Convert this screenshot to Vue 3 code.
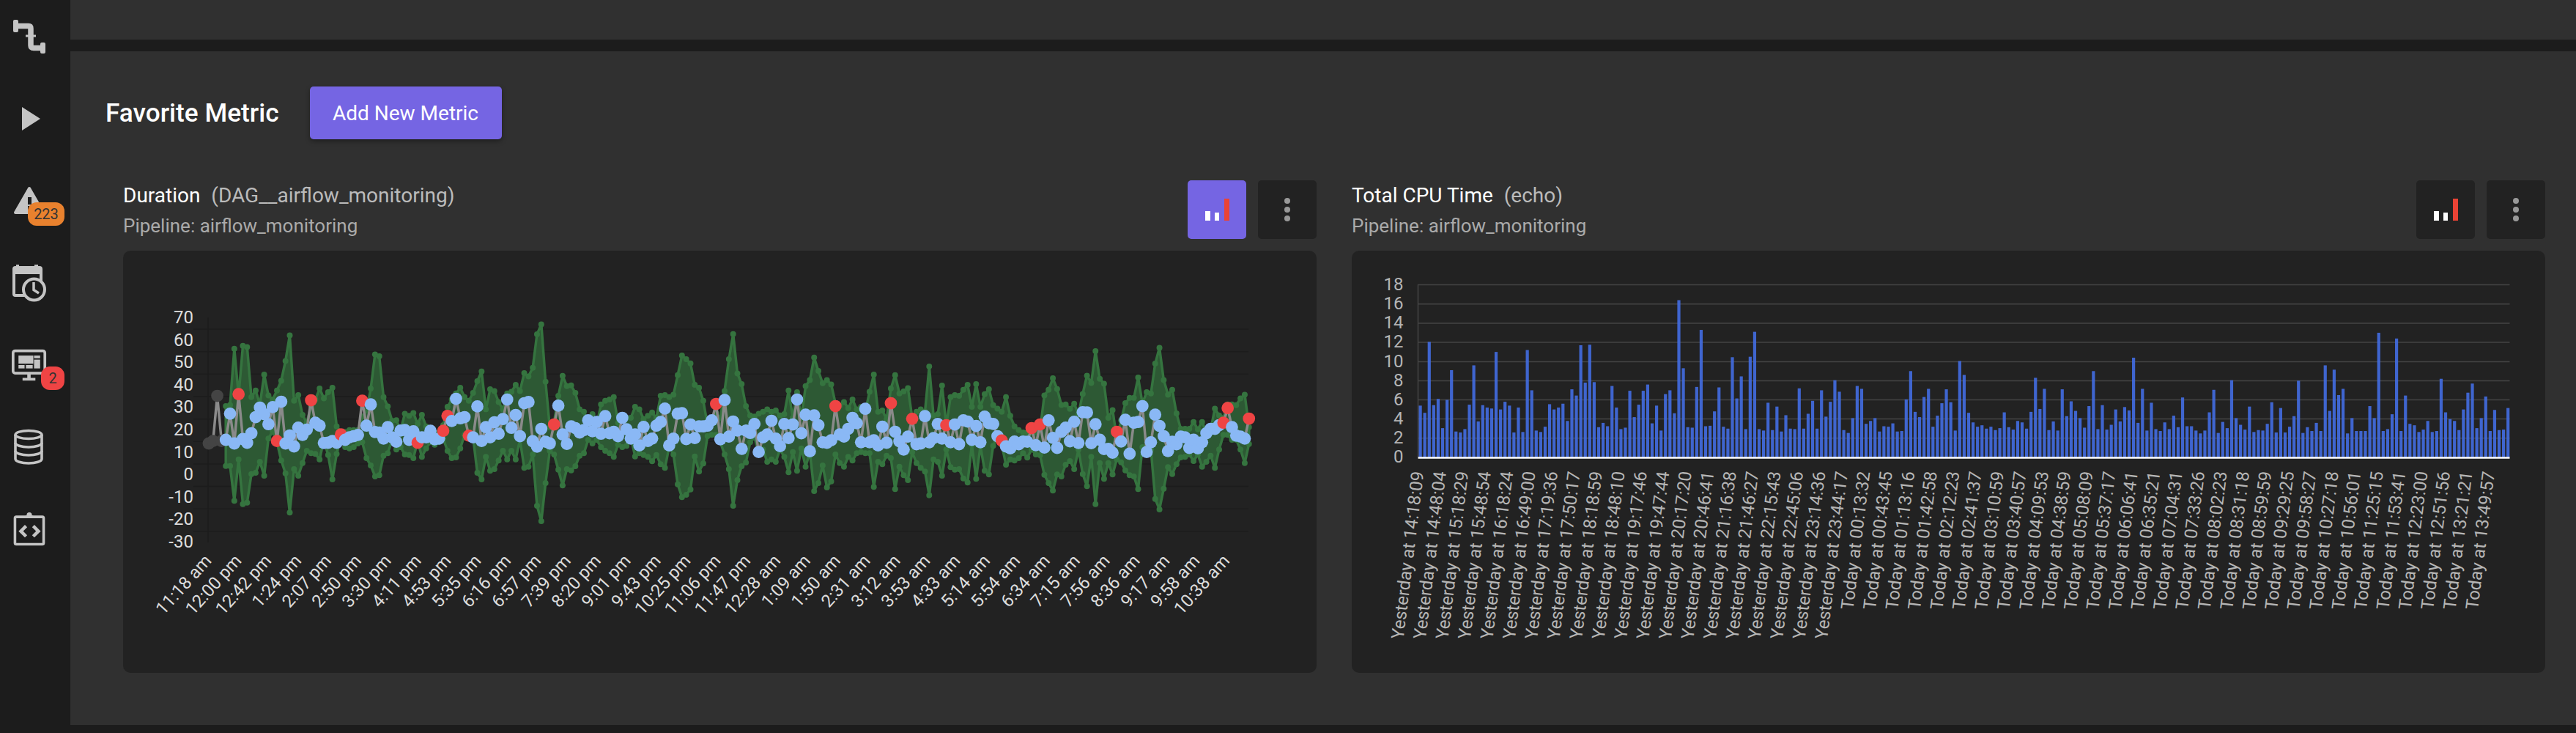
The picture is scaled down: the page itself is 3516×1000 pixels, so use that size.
<template>
  <div class="app">
    <nav class="sidebar">
      <div class="nav-item">
        <svg class="nav-icon" viewBox="0 0 48 48">
          <rect x="2" y="1" width="7" height="17" rx="2" fill="#c4c4c4" />
          <path d="M8 9.5H23Q26 9.5 26 13V36Q26 39.5 30 39.5H40" fill="none" stroke="#c4c4c4" stroke-width="7.5" />
          <rect x="19" y="21.5" width="14" height="3" fill="#c4c4c4" />
          <rect x="39" y="32" width="7" height="15" rx="2" fill="#c4c4c4" />
        </svg>
      </div>
      <div class="nav-item">
        <svg class="nav-icon" viewBox="0 0 48 48">
          <path d="M14 8L39 24L14 40Z" fill="#c4c4c4" />
        </svg>
      </div>
      <div class="nav-item">
        <svg class="nav-icon" viewBox="0 0 48 48">
          <path d="M24 7L43 40H5Z" fill="#c4c4c4" stroke="#c4c4c4" stroke-width="4" stroke-linejoin="round" />
          <rect x="22" y="19" width="5" height="10" fill="#1c1c1c" />
          <rect x="22" y="31" width="5" height="5" fill="#1c1c1c" />
        </svg>
        <span class="nav-badge orange">223</span>
      </div>
      <div class="nav-item">
        <svg class="nav-icon" viewBox="0 0 48 48">
          <rect x="3" y="3" width="37" height="38" rx="2" fill="none" stroke="#c4c4c4" stroke-width="4" />
          <rect x="2" y="2" width="39" height="10" rx="2" fill="#c4c4c4" />
          <rect x="6" y="-1" width="4" height="5" fill="#c4c4c4" />
          <rect x="31" y="-1" width="5" height="5" fill="#c4c4c4" />
          <circle cx="30.5" cy="33" r="14.5" fill="#1c1c1c" stroke="#c4c4c4" stroke-width="4" />
          <path d="M30 23V33.5L37 38" fill="none" stroke="#c4c4c4" stroke-width="3.5" />
        </svg>
      </div>
      <div class="nav-item">
        <svg class="nav-icon" viewBox="0 0 52 48">
          <rect x="2" y="3" width="47" height="33" rx="3" fill="none" stroke="#c4c4c4" stroke-width="4" />
          <rect x="10" y="10" width="22" height="12" fill="#c4c4c4" />
          <rect x="33" y="10" width="9" height="4" fill="#c4c4c4" />
          <rect x="33" y="16" width="9" height="13" fill="#c4c4c4" />
          <rect x="10" y="24" width="9" height="5" fill="#c4c4c4" />
          <rect x="21" y="24" width="10" height="5" fill="#c4c4c4" />
          <rect x="23" y="37" width="5" height="7" fill="#c4c4c4" />
          <rect x="16" y="43" width="19" height="4" fill="#c4c4c4" />
        </svg>
        <span class="nav-badge red">2</span>
      </div>
      <div class="nav-item">
        <svg class="nav-icon" viewBox="0 0 48 48">
          <ellipse cx="23" cy="7" rx="18" ry="5.5" fill="none" stroke="#c4c4c4" stroke-width="3.6" />
          <path d="M5 7V40C5 43.5 13 46 23 46S41 43.5 41 40V7" fill="none" stroke="#c4c4c4" stroke-width="3.6" />
          <path d="M5 18C5 21.5 13 24 23 24S41 21.5 41 18" fill="none" stroke="#c4c4c4" stroke-width="3.6" />
          <path d="M5 29C5 32.5 13 35 23 35S41 32.5 41 29" fill="none" stroke="#c4c4c4" stroke-width="3.6" />
        </svg>
      </div>
      <div class="nav-item">
        <svg class="nav-icon" viewBox="0 0 48 54">
          <rect x="2" y="8" width="44" height="42" rx="2" fill="none" stroke="#c4c4c4" stroke-width="4" />
          <circle cx="24" cy="5" r="4" fill="#c4c4c4" />
          <rect x="18" y="6" width="12" height="4" fill="#c4c4c4" />
          <path d="M19 22L11 30L19 38M30 22L38 30L30 38" fill="none" stroke="#c4c4c4" stroke-width="5" />
        </svg>
      </div>
    </nav>

    <div class="content">
      <div class="top-panel"></div>
      <main class="main-panel">
        <div class="page-head">
          <h1 class="page-title">Favorite Metric</h1>
          <button class="add-btn">Add New Metric</button>
        </div>

        <div class="metric-row">
          <section class="metric">
            <div class="metric-head">
              <div class="metric-text">
                <div class="metric-title">Duration <span class="metric-sub">(DAG__airflow_monitoring)</span></div>
                <div class="metric-pipeline">Pipeline: airflow_monitoring</div>
              </div>
              <div class="metric-actions">
                <button class="icon-btn active">
                  <svg width="33" height="30" viewBox="0 0 33 30">
                    <rect x="0" y="17" width="7" height="13" fill="#fff" />
                    <rect x="13" y="19" width="6" height="11" fill="#fff" />
                    <rect x="26" y="0" width="7" height="30" fill="#ea4335" />
                  </svg>
                </button>
                <button class="icon-btn">
                  <svg width="10" height="34" viewBox="0 0 10 34">
                    <circle cx="5" cy="5" r="4" fill="#999" />
                    <circle cx="5" cy="17" r="4" fill="#999" />
                    <circle cx="5" cy="29" r="4" fill="#999" />
                  </svg>
                </button>
              </div>
            </div>
            <div class="chart-card">
              <svg class="chart" viewBox="168 342 1630 576">
                <line x1="284" y1="433" x2="284" y2="740" class="dark-grid" />
                <line v-for="y in durationGrid" :key="y" x1="264" x2="1705" :y1="y" :y2="y" class="dark-grid" />
                <text
                  v-for="(t, i) in durationTicks"
                  :key="t"
                  class="duration-tick"
                  x="264"
                  :y="432 + i * 30.6 + 9"
                  text-anchor="end"
                >{{ t }}</text>
                <text
                  v-for="(t, i) in durationTimes"
                  :key="t"
                  class="duration-time"
                  text-anchor="end"
                  :transform="`translate(${290 + i * 40.9} 766) rotate(-48)`"
                >{{ t }}</text>

                <path :d="bandPath" fill="#2d5934" stroke="#35743f" stroke-width="3.5" stroke-linejoin="round" />
                <circle v-for="(c, i) in bandDots" :key="i" :cx="c.x" :cy="c.y" r="4" fill="#35743f" />
                <path :d="linePath" fill="none" stroke="#8a8a8a" stroke-width="3.5" stroke-linejoin="round" />
                <circle
                  v-for="(p, i) in durationPoints"
                  :key="i"
                  :cx="p.x"
                  :cy="p.y"
                  r="8.4"
                  :fill="p.color"
                />
              </svg>
            </div>
          </section>

          <section class="metric">
            <div class="metric-head">
              <div class="metric-text">
                <div class="metric-title">Total CPU Time <span class="metric-sub">(echo)</span></div>
                <div class="metric-pipeline">Pipeline: airflow_monitoring</div>
              </div>
              <div class="metric-actions">
                <button class="icon-btn">
                  <svg width="33" height="30" viewBox="0 0 33 30">
                    <rect x="0" y="17" width="7" height="13" fill="#fff" />
                    <rect x="13" y="19" width="6" height="11" fill="#fff" />
                    <rect x="26" y="0" width="7" height="30" fill="#ea4335" />
                  </svg>
                </button>
                <button class="icon-btn">
                  <svg width="10" height="34" viewBox="0 0 10 34">
                    <circle cx="5" cy="5" r="4" fill="#999" />
                    <circle cx="5" cy="17" r="4" fill="#999" />
                    <circle cx="5" cy="29" r="4" fill="#999" />
                  </svg>
                </button>
              </div>
            </div>
            <div class="chart-card">
              <svg class="chart" viewBox="1846 342 1628 576">
                <line x1="1936" y1="388" x2="1936" y2="624" class="light-grid" />
                <line v-for="y in cpuGrid" :key="y" x1="1936" x2="3426" :y1="y" :y2="y" class="light-grid" />
                <rect
                  v-for="b in cpuBars"
                  :key="b.x"
                  :x="b.x"
                  :y="b.y"
                  width="4.2"
                  :height="624 - b.y"
                  fill="#4169d9"
                  fill-opacity="0.95"
                />
                <line x1="1936" y1="624.5" x2="3426" y2="624.5" stroke="#fff" stroke-width="2.5" />
                <text
                  v-for="(t, i) in cpuTicks"
                  :key="t"
                  class="cpu-tick"
                  x="1916"
                  :y="622 - i * 26.1 + 9"
                  text-anchor="end"
                >{{ t }}</text>
                <text
                  v-for="(t, i) in cpuTimes"
                  :key="t"
                  class="cpu-time"
                  text-anchor="end"
                  :transform="`translate(${1944 + i * 30.45} 644) rotate(-83)`"
                >{{ t }}</text>
              </svg>
            </div>
          </section>
        </div>
      </main>
    </div>
  </div>
</template>

<script setup>
import { computed } from 'vue'

const durationTicks = [70, 60, 50, 40, 30, 20, 10, 0, -10, -20, -30]
const durationGrid = Array.from({ length: 10 }, (_, i) => 449 + i * 30.65)
const durationTimes = [
  '11:18 am', '12:00 pm', '12:42 pm', '1:24 pm', '2:07 pm', '2:50 pm', '3:30 pm', '4:11 pm', '4:53 pm',
  '5:35 pm', '6:16 pm', '6:57 pm', '7:39 pm', '8:20 pm', '9:01 pm', '9:43 pm', '10:25 pm', '11:06 pm',
  '11:47 pm', '12:28 am', '1:09 am', '1:50 am', '2:31 am', '3:12 am', '3:53 am', '4:33 am', '5:14 am',
  '5:54 am', '6:34 am', '7:15 am', '7:56 am', '8:36 am', '9:17 am', '9:58 am', '10:38 am'
]

// plot units are 1/3 px from the top of the plot; [value, upper, lower, anomaly]
const duration = [
  [525], [515], [330], [515],
  [510,372,617],[403,367,617],[525,137,760],[323,330,590,1],[507,125,773],[522,130,767],[483,335,650],[417,308,645],
  [378,365,600],[405,243,657],[446,328,505],[376,345,475],[515,308,520,1],[354,268,595],[525,187,647],[492,82,808],
  [537,350,630],[460,327,657],[490,408,605],[468,440,555],[348,370,565,1],[440,345,568],[452,300,590],[523,340,510],
  [522,315,572],[515,297,672],[522,455,568],[488,478,500,1],[510,478,540],[500,470,545],[495,470,540],[490,470,525],
  [350,415,520,1],[452,390,585],[365,300,615],[478,160,660],[480,168,655],[505,335,575],[458,373,565],[500,432,510],
  [518,430,550],[472,470,540],[470,403,570],[510,412,572],[475,400,585],[522,445,515,1],[500,408,580],[500,455,545],
  [473,480,520],[508,480,530],[505,480,520],[473,450,505,1],[412,375,555,1],[433,345,585],[342,320,582],[422,297,545],
  [417,335,490],[493,350,500,1],[500,318,500],[373,270,645],[515,230,672],[458,385,580],[500,303,637],[438,310,630],
  [485,355,595],[425,385,555],[345,320,590],[461,313,555],[408,285,590],[495,310,510],[360,237,625],[355,250,620],
  [516,215,570],[538,78,780],[465,37,843],[518,272,687],[525,460,555],[447,440,570,1],[370,330,632],[488,248,697],
  [527,290,630],[455,287,635],
  [462,318,618],[480,385,575],[470,395,565],[430,450,510],[475,405,525],[437,450,510],[485,365,540],[413,350,555],
  [483,345,565],[477,335,580],[495,440,530],[420,480,540],[467,420,535],[505,420,500],[488,375,578],[533,385,565],
  [457,425,572],[515,412,580],[505,398,598],[452,420,572],[437,330,610],[382,327,625],[533,335,540],[505,325,570],
  [403,245,692],[401,165,745],[507,180,735],[447,197,713],[503,285,578],[455,297,640],[455,350,607],[452,450,495],
  [430,420,490],[363,400,490,1],[508,420,520],[347,310,570],[497,180,630],[435,77,780],[472,238,675],[547,282,618],
  [472,372,603],[482,410,520],[445,415,500],[560,403,560],[500,395,550],[488,385,600],[432,395,590],[505,390,600],
  [536,410,550],[445,405,580],[503,308,643],[447,420,560],[345,315,637],[483,420,545],[407,290,620],[557,265,560],
  [410,173,720],[450,228,687],[520,278,615],[522,265,705],[512,283,680],[372,360,570,1],[488,370,605],[497,355,620],
  [465,380,580],[420,345,595],[442,385,565],[520,375,560],[383,395,565],[520,313,565],[512,243,703],[533,395,600],
  [456,390,610],[522,425,575],[360,300,585,1],[477,245,712],[516,320,620],[550,312,655],[497,298,675],[424,420,560,1],
  [528,395,605],[525,385,625],[413,395,640],[520,210,737],[503,410,590],
  [445,405,600],[505,288,657],[450,450,550,1],[520,335,622],[447,327,632],[528,330,630],[430,305,668],[435,285,685],
  [510,375,530],[453,282,670],[520,375,535],[415,323,637],[442,303,652],[445,368,535],[495,382,495],[513,395,530,1],
  [537,335,612],[545,412,590],[517,455,595],[528,470,585],[517,480,565],[518,480,583],[462,480,550,1],[532,480,570],
  [447,470,573,1],[542,328,653],[430,305,687],[502,258,718],[543,302,652],[477,367,660],[460,365,612],[516,383,597],
  [436,362,630],[523,405,550],[397,322,650],[398,247,700],[524,277,580],[446,147,773],[510,260,605],[548,280,670],
  [547,420,605],[563,388,652],[477,505,590,1],[517,430,602],[428,360,635],[567,338,655],[440,338,660],[437,255,712],
  [372,360,540],[560,315,570],[520,320,550],[407,198,752],[453,133,795],[495,265,710],[556,325,622],[518,305,650],
  [528,402,610],[497,465,582],[500,465,580],[543,465,570],[510,437,597],[545,467,570],[520,437,620],[483,480,600],
  [465,470,575],[465,382,625],[450,410,550],[440,420,490,1],[380,365,490,1],[458,365,510],[493,368,510],[497,340,550],
  [505,325,605],[423,458,527,1]
]

const stepX = (1705.7 - 285) / (duration.length - 1)
const xAt = (i) => 285 + i * stepX
const yAt = (v) => 430 + v / 3
const withBand = duration.map((d, i) => ({ i, d })).filter((p) => p.d.length > 1)

const bandPath = computed(() => {
  const up = withBand.map((p) => `${xAt(p.i).toFixed(1)} ${yAt(p.d[1]).toFixed(1)}`)
  const low = withBand.map((p) => `${xAt(p.i).toFixed(1)} ${yAt(p.d[2]).toFixed(1)}`).reverse()
  return `M${up.join('L')}L${low.join('L')}Z`
})

const bandDots = computed(() =>
  withBand.flatMap((p) => [
    { x: xAt(p.i), y: yAt(p.d[1]) },
    { x: xAt(p.i), y: yAt(p.d[2]) }
  ])
)

const linePath = computed(() =>
  'M' + duration.map((d, i) => `${xAt(i).toFixed(1)} ${yAt(d[0]).toFixed(1)}`).join('L')
)

const durationPoints = computed(() =>
  duration.map((d, i) => ({
    x: xAt(i),
    y: yAt(d[0]),
    color: d.length === 1 ? '#444' : d[3] ? '#ef4444' : '#8ab8f5'
  }))
)

const cpuTicks = [0, 2, 4, 6, 8, 10, 12, 14, 16, 18]
const cpuGrid = [388.6, 414.8, 441, 467, 493.5, 519.5, 545.5, 571.5, 597.7]
const cpuTimes = [
  'Yesterday at 14:18:09', 'Yesterday at 14:48:04', 'Yesterday at 15:18:29', 'Yesterday at 15:48:54',
  'Yesterday at 16:18:24', 'Yesterday at 16:49:00', 'Yesterday at 17:19:36', 'Yesterday at 17:50:17',
  'Yesterday at 18:18:59', 'Yesterday at 18:48:10', 'Yesterday at 19:17:46', 'Yesterday at 19:47:44',
  'Yesterday at 20:17:20', 'Yesterday at 20:46:41', 'Yesterday at 21:16:38', 'Yesterday at 21:46:27',
  'Yesterday at 22:15:43', 'Yesterday at 22:45:06', 'Yesterday at 23:14:36', 'Yesterday at 23:44:17',
  'Today at 00:13:32', 'Today at 00:43:45', 'Today at 01:13:16', 'Today at 01:42:58', 'Today at 02:12:23',
  'Today at 02:41:37', 'Today at 03:10:59', 'Today at 03:40:57', 'Today at 04:09:53', 'Today at 04:38:59',
  'Today at 05:08:09', 'Today at 05:37:17', 'Today at 06:06:41', 'Today at 06:35:21', 'Today at 07:04:31',
  'Today at 07:33:26', 'Today at 08:02:23', 'Today at 08:31:18', 'Today at 08:59:59', 'Today at 09:29:25',
  'Today at 09:58:27', 'Today at 10:27:18', 'Today at 10:56:01', 'Today at 11:25:15', 'Today at 11:53:41',
  'Today at 12:23:00', 'Today at 12:51:56', 'Today at 13:21:21', 'Today at 13:49:57'
]

const cpu = [
  5.4,4.65,12.05,5.45,6.1,3.05,6,9.1,2.7,2.6,2.95,5.5,9.6,3.75,5.45,5.2,5.1,11,5,5.8,5.4,2.6,5.2,2.65,11.2,7,2.8,2.65,
  3.2,5.55,5,5.2,5.6,3.8,7.1,6.45,11.7,7.8,11.75,7.85,3.15,3.6,3.25,7.45,5.2,2.95,3.1,6.95,4.2,5.5,6.95,7.6,3.55,5.4,
  2.8,6.6,7,4.6,16.4,9.3,3.15,3.1,7.35,13.3,3.25,3.3,4.8,7.3,3.2,3,10.45,6.15,8.45,2.95,10.5,13.1,
  2.95,2.8,5.7,2.85,5.3,2.7,4.4,3,2.95,7.2,3,4.55,5.9,3,7,4.25,5.8,8.05,6.85,2.85,2.55,4.1,7.45,7.15,3.5,3.8,4.1,2.7,
  3.25,3.2,3.55,2.7,2.75,6.05,9,4.75,4.2,6.3,7.15,3.2,4.35,5.65,7.1,5.75,2.8,10.05,8.6,4.65,3.65,3.2,3.35,3,3.2,2.85,
  3.05,4.7,3.15,2.9,3.8,3.65,3,4.75,8.3,5.05,7.15,2.85,3.75,2.8,7.1,4.3,5.85,4.85,4.1,3.1,5.35,9,2.95,5.45,2.9,3.4,5,3.75,5.25,
  4.9,10.4,3.6,7.15,2.8,5.7,2.95,2.75,3.65,2.95,4.35,3.15,6.25,3.25,3.25,2.8,2.5,2.8,4.7,7.05,2.55,3.7,3.05,8.05,4.1,3.4,
  2.9,5.3,2.65,2.85,2.8,3.5,5.75,2.6,5.15,2.6,3.2,4.3,8,2.55,3.15,2.75,3.6,2.75,9.6,4.85,9.15,6.5,7.15,2.5,4.1,2.75,2.75,
  2.75,5.35,4.1,13,2.75,2.95,4.5,12.4,2.75,6.45,3.5,3.35,2.65,2.9,3.8,2.65,2.75,8.2,4.7,4,3.8,2.85,5,6.75,7.7,3.05,4.1,6.35,
  2.75,4.95,2.85,2.9,5.15
]

const cpuBars = computed(() => {
  const step = (3421.6 - 1937) / (cpu.length - 1)
  return cpu.map((v, i) => ({ x: 1937 + i * step, y: 624 - v * 13.08 }))
})
</script>

<style>
body {
  background: #1c1c1c;
}
</style>

<style scoped>
.app {
  display: flex;
  width: 3516px;
  height: 1000px;
  overflow: hidden;
  background: #1c1c1c;
  font-family: Roboto, "Liberation Sans", sans-serif;
  color: #fff;
}

.sidebar {
  width: 96px;
  flex-shrink: 0;
  display: flex;
  flex-direction: column;
  gap: 64px;
  padding-top: 26px;
  box-sizing: border-box;
}

.nav-item {
  position: relative;
  width: 80px;
  height: 48px;
  display: flex;
  align-items: center;
  justify-content: center;
}

.nav-icon {
  width: 48px;
  height: 48px;
  overflow: visible;
}

.nav-badge {
  position: absolute;
  height: 32px;
  display: flex;
  align-items: center;
  justify-content: center;
  font-size: 20px;
  color: #333;
  border-radius: 12px;
}

.nav-badge.orange {
  left: 38px;
  top: 26px;
  width: 50px;
  background: #e8812e;
}

.nav-badge.red {
  left: 56px;
  top: 26px;
  width: 32px;
  background: #ef4444;
}

.content {
  flex: 1;
  min-width: 0;
}

.top-panel {
  height: 54px;
  background: #303030;
}

.main-panel {
  margin-top: 16px;
  height: 919px;
  box-sizing: border-box;
  padding: 48px 42px 0 48px;
  background: #303030;
}

.page-head {
  display: flex;
  align-items: center;
  gap: 42px;
  height: 72px;
}

.page-title {
  margin: 0;
  font-size: 35.2px;
  font-weight: 500;
  color: #fff;
}

.add-btn {
  width: 262px;
  height: 72px;
  border: none;
  border-radius: 5px;
  background: #7565e3;
  color: #fff;
  font-family: inherit;
  font-size: 28px;
  box-shadow: 0 3px 6px rgba(0, 0, 0, 0.35);
}

.metric-row {
  display: flex;
  gap: 48px;
  margin-top: 56px;
  padding-left: 24px;
}

.metric {
  flex: 1;
  min-width: 0;
}

.metric-head {
  display: flex;
  justify-content: space-between;
  height: 80px;
}

.metric-title {
  margin-top: 2px;
  font-size: 28px;
  line-height: 38px;
  white-space: pre-wrap;
}

.metric-sub {
  margin-left: 8px;
  color: #bbb;
}

.metric-pipeline {
  margin-top: 6px;
  font-size: 26px;
  line-height: 32px;
  color: #aaa;
}

.metric-actions {
  display: flex;
  gap: 16px;
}

.icon-btn {
  width: 80px;
  height: 80px;
  padding: 0;
  border: none;
  border-radius: 5px;
  background: #222;
  display: flex;
  align-items: center;
  justify-content: center;
}

.icon-btn.active {
  background: #7565e3;
}

.chart-card {
  margin-top: 16px;
  height: 576px;
  border-radius: 10px;
  background: #222;
  overflow: hidden;
}

.chart {
  display: block;
  width: 100%;
  height: 100%;
}

.dark-grid {
  stroke: #1c1c1c;
  stroke-width: 1.5;
}

.light-grid {
  stroke: #444;
  stroke-width: 1.5;
}

.duration-tick,
.duration-time {
  font-size: 24px;
  fill: #ddd;
}

.cpu-tick,
.cpu-time {
  font-size: 24px;
  fill: #b5b5b5;
}
</style>
